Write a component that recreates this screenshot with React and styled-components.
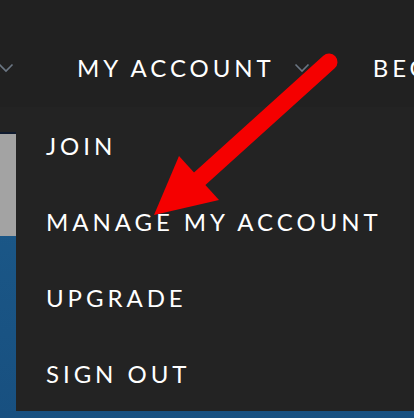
import React from "react";
import styled, { createGlobalStyle } from "styled-components";

const Global = createGlobalStyle`
  html, body { margin: 0; padding: 0; background: #222222; }
  body { width: 414px; height: 418px; overflow: hidden; font-family: Lato, "Noto Sans", sans-serif; }
`;

const Page = styled.div`
  position: relative;
  width: 414px;
  height: 418px;
  overflow: hidden;
  display: flex;
  flex-direction: column;
`;

const Header = styled.header`
  height: 107px;
  background: #212121;
  display: flex;
  align-items: center;
  padding-top: 28px;
  box-sizing: border-box;
  white-space: nowrap;
`;

const NavLabel = styled.span`
  color: #ffffff;
  font-size: 24px;
  font-weight: 400;
  letter-spacing: 3.95px;
  margin-left: ${(p) => p.$ml}px;
`;

const Chevron = styled.svg`
  width: 16px;
  height: 10px;
  flex: none;
  margin-left: ${(p) => p.$ml}px;
`;

const Body = styled.div`
  flex: 1;
  display: flex;
  background: linear-gradient(180deg, #1c5b8b 0%, #185080 100%);
`;

const Strip = styled.div`
  width: 16px;
  display: flex;
  flex-direction: column;
`;

const StripDark = styled.div`
  height: 25px;
  background: #232323;
`;

const StripLine = styled.div`
  height: 2px;
  background: #0f1a2e;
`;

const StripGrey = styled.div`
  height: 102px;
  background: #a3a3a3;
`;

const Panel = styled.ul`
  list-style: none;
  margin: 0;
  padding: 0 0 0 30px;
  flex: 1;
  height: 304px;
  background: #232323;
  display: flex;
  flex-direction: column;
`;

const Item = styled.li`
  color: #ffffff;
  font-size: 24px;
  letter-spacing: 3.95px;
  height: 76px;
  line-height: 76px;
  &:first-child { margin-top: 1px; }
`;

const Arrow = styled.svg`
  position: absolute;
  left: 0;
  top: 0;
  width: 414px;
  height: 418px;
  pointer-events: none;
`;

const Chev = ({ ml }) => (
  <Chevron $ml={ml} viewBox="0 0 16 10">
    <polyline points="1.5,1.5 8,8 14.5,1.5" fill="none" stroke="#6b7683" strokeWidth="1.6" />
  </Chevron>
);

export default function App() {
  return (
    <Page>
      <Global />
      <Header>
        <Chev ml={-2} />
        <NavLabel $ml={63}>MY ACCOUNT</NavLabel>
        <Chev ml={19} />
        <NavLabel $ml={63}>BEGIN</NavLabel>
      </Header>
      <Body>
        <Strip>
          <StripDark />
          <StripLine />
          <StripGrey />
        </Strip>
        <Panel>
          <Item>JOIN</Item>
          <Item>MANAGE MY ACCOUNT</Item>
          <Item>UPGRADE</Item>
          <Item>SIGN OUT</Item>
        </Panel>
      </Body>
      <Arrow viewBox="0 0 414 418">
        <line x1="329" y1="62" x2="195" y2="183" stroke="#f50000" strokeWidth="17" strokeLinecap="round" />
        <polygon points="154,215 179,156 219,200" fill="#f50000" />
      </Arrow>
    </Page>
  );
}
